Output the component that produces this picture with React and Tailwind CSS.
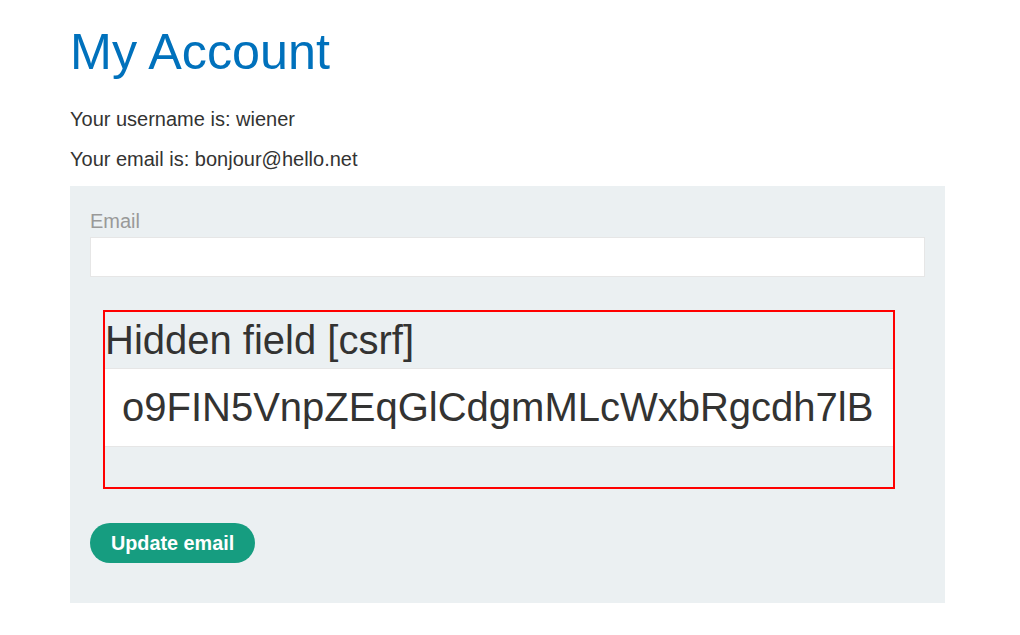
const App = () => {
  return (
    <div
      className="min-h-screen bg-white text-[#333332]"
      style={{ fontFamily: '"Liberation Sans", Arial, sans-serif' }}
    >
      <div className="ml-[70px] w-[875px]">
        <h1 className="pt-[22px] text-[50.3px] leading-[60px] font-normal text-[#0071bc]">
          My Account
        </h1>
        <p className="mt-[25px] text-[20px] leading-[24px]">Your username is: wiener</p>
        <p className="mt-[16px] text-[20px] leading-[24px]">Your email is: bonjour@hello.net</p>

        <form className="mt-[15px] bg-[#ebf0f2] px-5 pt-[23px] pb-[40px]">
          <label className="block text-[20px] leading-[24px] text-[#999999]">Email</label>
          <input
            type="email"
            name="email"
            className="mt-1 block h-[40px] w-full border border-[#e6e6e6] bg-white px-2 text-[20px] outline-none"
          />

          <div className="mt-[33px] ml-[13px] w-[792px] border-2 border-[#ff0000]">
            <div className="h-[56px] text-[40px] leading-[56px] whitespace-nowrap">
              Hidden field [csrf]
            </div>
            <div className="border-y border-[#e6e6e6] bg-white py-[11px] pl-[17px] text-[40px] leading-[55px] whitespace-nowrap">
              o9FIN5VnpZEqGlCdgmMLcWxbRgcdh7lB
            </div>
            <div className="h-[40px]" />
          </div>

          <button
            type="button"
            className="mt-[34px] h-[40px] rounded-full bg-[#169d80] px-[21px] text-[19.8px] font-bold leading-[40px] text-white"
          >
            Update email
          </button>
        </form>
      </div>
    </div>
  );
};

export default App;
